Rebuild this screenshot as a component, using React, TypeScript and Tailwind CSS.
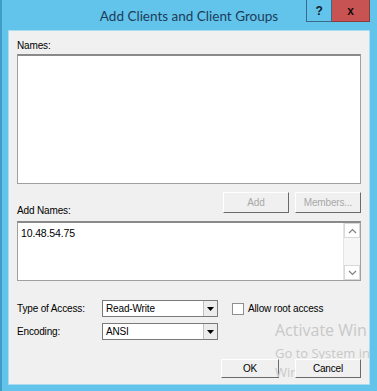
export default function App() {
  const ui = { fontFamily: '"Liberation Sans", Arial, sans-serif' };
  return (
    <div
      className="relative flex h-[391px] w-[377px] flex-col border-l-[2px] border-l-[#3f9cc4] bg-[#62c4ea] pb-[6px] pl-[6px] pr-[7px] text-[10px] tracking-[-0.15px] text-black"
      style={ui}
    >
      {/* title bar */}
      <div className="relative flex h-[30px] shrink-0 items-center justify-center">
        <span className="pt-[2px] text-[13.5px] tracking-normal text-[#1d3c5a]" style={{ fontFamily: 'Lato, "Noto Sans", sans-serif' }}>
          Add Clients and Client Groups
        </span>
        <div className="absolute right-0 top-0 flex h-[22px]">
          <div className="flex w-[26px] items-center justify-center border border-t-0 border-[#3a6a88] bg-[#62c4ea] text-[12px] font-bold text-[#102030]">?</div>
          <div className="flex w-[38px] items-center justify-center border-b border-r border-[#8a3c3c] bg-[#c75452] text-[12px] font-bold text-[#1a0a0a]">x</div>
        </div>
      </div>

      {/* client area */}
      <div className="relative flex flex-1 flex-col overflow-hidden border border-[#a8dcef] bg-[#f0f0f0] px-[8px] pt-[8px] pb-[6px]">
        <div className="h-[13px] leading-[13px]">Names:</div>
        <div className="mt-[2px] h-[130px] border border-[#a0a0a0] border-t-[2px] border-t-[#8a8a8a] bg-white" />

        <div className="mt-[8px] flex h-[21px] items-start">
          <div className="mt-[12px] flex-1 leading-[13px]">Add Names:</div>
          <button className="h-[21px] w-[66px] border border-t-white border-l-white border-b-[#6a6a6a] border-r-[#6a6a6a] bg-[#f0f0f0] text-[10px] text-[#a8a8a8]">Add</button>
          <button className="ml-[6px] h-[21px] w-[66px] border border-t-white border-l-white border-b-[#6a6a6a] border-r-[#6a6a6a] bg-[#f0f0f0] text-[10px] text-[#a8a8a8]">Members...</button>
        </div>

        <div className="mt-[8px] flex h-[60px] border border-[#a0a0a0] border-t-[2px] border-t-[#8a8a8a] bg-white">
          <div className="flex-1 pl-[3px] pt-[4px] text-[10.5px] leading-[13px]">10.48.54.75</div>
          <div className="flex w-[17px] flex-col border-l border-[#e4e4e4] bg-[#f6f6f6]">
            <div className="flex h-[15px] items-center justify-center border border-[#d8d8d8] bg-white">
              <svg width="9" height="6" viewBox="0 0 9 6"><path d="M1 5 L4.5 1.5 L8 5" fill="none" stroke="#808080" strokeWidth="1.2" /></svg>
            </div>
            <div className="flex-1" />
            <div className="flex h-[15px] items-center justify-center border border-[#d8d8d8] bg-white">
              <svg width="9" height="6" viewBox="0 0 9 6"><path d="M1 1 L4.5 4.5 L8 1" fill="none" stroke="#808080" strokeWidth="1.2" /></svg>
            </div>
          </div>
        </div>

        <div className="mt-[19px] flex h-[17px] items-center">
          <div className="w-[85px]">Type of Access:</div>
          <Select value="Read-Write" />
          <div className="ml-[14px] h-[12px] w-[12px] border border-[#8e8f8f] bg-white" />
          <div className="ml-[4px]">Allow root access</div>
        </div>
        <div className="mt-[6px] flex h-[17px] items-center">
          <div className="w-[85px]">Encoding:</div>
          <Select value="ANSI" />
        </div>

        {/* activation watermark: over OK, under Cancel */}
        <div
          className="pointer-events-none absolute left-[266px] top-[288px] z-[5] whitespace-nowrap tracking-normal text-[#c8c8c8]"
          style={{ fontFamily: '"Open Sans", "Noto Sans", sans-serif' }}
        >
          <div className="text-[16px] leading-[22px]">Activate Win</div>
          <div className="mt-[3px] text-[13px] leading-[18px]">Go to System in</div>
          <div className="mt-[1px] text-[13px] leading-[18px]">Windo</div>
        </div>

        <div className="mt-[19px] flex h-[19px] justify-end">
          <button className="h-[19px] w-[58px] border border-t-white border-l-white border-b-[#6a6a6a] border-r-[#6a6a6a] text-[10px]">OK</button>
          <button className="relative z-10 ml-[16px] h-[19px] w-[66px] border border-t-white border-l-white border-b-[#6a6a6a] border-r-[#6a6a6a] bg-[#f0f0f0] text-[10px]">Cancel</button>
        </div>
      </div>
    </div>
  );
}

function Select({ value }: { value: string }) {
  return (
    <div className="flex h-[17px] w-[116px] border border-[#7a7a7a] bg-white">
      <div className="flex-1 pl-[3px] leading-[15px]">{value}</div>
      <div className="flex w-[14px] items-center justify-center border-l border-[#c0c0c0] bg-[#ececec]">
        <svg width="7" height="4" viewBox="0 0 7 4"><path d="M0 0 H7 L3.5 4 Z" fill="#000" /></svg>
      </div>
    </div>
  );
}
